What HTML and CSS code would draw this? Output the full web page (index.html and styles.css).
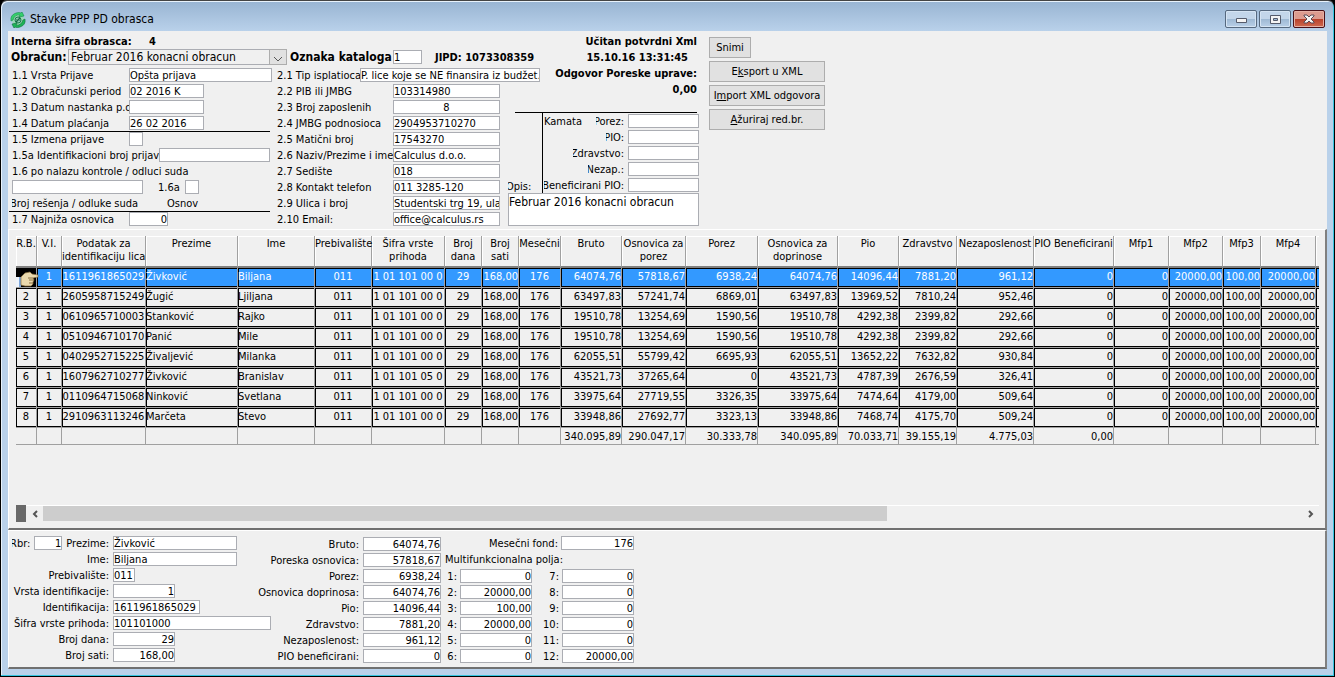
FILE: index.html
```html
<!DOCTYPE html>
<html lang="sr">

<head>
    <meta charset="UTF-8">
    <meta name="viewport" content="width=device-width, initial-scale=1.0">
    <title>Stavke PPP PD obrasca</title>
    <link rel="stylesheet" href="styles.css">
</head>

<body>
    <div class="window">
        <div class="titlebar">
            <svg class="app-icon" viewBox="0 0 16 16">
                <circle cx="8" cy="8" r="6" fill="#9ad8b4"/>
                <path d="M1 9 Q0 3 6 1 Q9 0 11 1 L12 0 L14 4 L9 5 L10 3 Q5 2 3 8 Z" fill="#35d06c" stroke="#12894a" stroke-width="0.6"/>
                <path d="M15 7 Q16 13 10 15 Q7 16 5 15 L4 16 L2 12 L7 11 L6 13 Q11 14 13 8 Z" fill="#1fb457" stroke="#0c7038" stroke-width="0.6"/>
                <circle cx="8" cy="8" r="3" fill="#8fcab4" stroke="#1a7a4c"/>
                <path d="M6 10 L10 6 M7 7 V10 M9 6 V9" stroke="#1a6a44" fill="none"/>
            </svg>
            <h1>Stavke PPP PD obrasca</h1>
            <div class="win-buttons">
                <button class="win-btn" aria-label="Minimize">
                    <svg viewBox="0 0 12 10"><path d="M1 5 H11 V9 H1 Z" transform="translate(.5 -.5)" fill="#f4f4f4" stroke="#555b6b"/></svg>
                </button>
                <button class="win-btn" aria-label="Maximize">
                    <svg viewBox="0 0 12 10"><path d="M1 1 H11 V9 H1 Z M4 4 H8 V6 H4 Z" transform="translate(.5 .5)" fill="#f4f4f4" fill-rule="evenodd" stroke="#555b6b"/></svg>
                </button>
                <button class="win-btn win-close" aria-label="Close">
                    <svg viewBox="0 0 12 10"><path d="M1 1 H4 L6 3 L8 1 H11 V2 L8 5 L11 8 V9 H8 L6 7 L4 9 H1 V8 L4 5 L1 2 Z" fill="#f4f4f4" stroke="#5b4a55"/></svg>
                </button>
            </div>
        </div>

        <div class="client">
            <!-- Header form -->
            <form class="form-panel">
                <div class="form-main">
                    <div class="row strong"><span class="caption">Interna šifra obrasca:</span><span>4</span></div>
                    <div class="row strong head-row">
                        <label class="big" for="obracun">Obračun:</label>
                        <div class="combo">
                            <select id="obracun">
                                <option>Februar 2016 konacni obracun</option>
                            </select>
                            <svg class="combo-arrow" viewBox="0 0 18 16"><rect x="0" y="0" width="18" height="16" fill="#adadad"/><rect x="1" y="1" width="16" height="14" fill="#e1e1e1"/><path d="M5 8 L9 12 L13 8" fill="none" stroke="#555"/></svg>
                        </div>
                        <label class="big katalog" for="katalog">Oznaka kataloga</label>
                        <input id="katalog" class="w29" value="1">
                        <span class="jipd">JIPD: 1073308359</span>
                    </div>
                    <div class="form-columns">
                        <div class="col-left">
                            <div class="row"><label class="name" for="f11">1.1 Vrsta Prijave</label><input id="f11" class="w143" value="Opšta prijava"></div>
                            <div class="row"><label class="name" for="f12">1.2 Obračunski period</label><input id="f12" class="w75" value="02 2016 K"></div>
                            <div class="row"><label class="name" for="f13">1.3 Datum nastanka p.o</label><input id="f13" class="w75"></div>
                            <div class="row"><label class="name" for="f14">1.4 Datum plaćanja</label><input id="f14" class="w75" value="26 02 2016"></div>
                            <div class="row lined"><label class="name" for="f15">1.5 Izmena prijave</label><input id="f15" class="w14"></div>
                            <div class="row"><label class="name name-wide" for="f15a">1.5a Identifikacioni broj prijav</label><input id="f15a" class="w111"></div>
                            <div class="row"><label for="f16">1.6 po nalazu kontrole / odluci suda</label></div>
                            <div class="row row-16"><input id="f16" class="w131"><label for="f16a">1.6a</label><input id="f16a" class="w14"></div>
                            <div class="row"><span class="cut broj">Broj rešenja / odluke suda</span><span>Osnov</span></div>
                            <div class="row lined"><label class="name" for="f17">1.7 Najniža osnovica</label><input id="f17" class="w39 num" value="0"></div>
                        </div>
                        <div class="col-mid">
                            <div class="row"><label class="name-short" for="f21">2.1 Tip isplatioca</label><input id="f21" class="w180" value="P. lice koje se NE finansira iz budžet…"></div>
                            <div class="row"><label class="name" for="f22">2.2 PIB ili JMBG</label><input id="f22" class="w107" value="103314980"></div>
                            <div class="row"><label class="name" for="f23">2.3 Broj zaposlenih</label><input id="f23" class="w107 mid" value="8"></div>
                            <div class="row"><label class="name" for="f24">2.4 JMBG podnosioca</label><input id="f24" class="w107" value="2904953710270"></div>
                            <div class="row"><label class="name" for="f25">2.5 Matični broj</label><input id="f25" class="w107" value="17543270"></div>
                            <div class="row"><label class="name" for="f26">2.6 Naziv/Prezime i ime</label><input id="f26" class="w107" value="Calculus d.o.o."></div>
                            <div class="row"><label class="name" for="f27">2.7 Sedište</label><input id="f27" class="w107" value="018"></div>
                            <div class="row"><label class="name" for="f28">2.8 Kontakt telefon</label><input id="f28" class="w107" value="011 3285-120"></div>
                            <div class="row"><label class="name" for="f29">2.9 Ulica i broj</label><input id="f29" class="w107" value="Studentski trg 19, ulaz"></div>
                            <div class="row"><label class="name" for="f210">2.10 Email:</label><input id="f210" class="w107" value="office@calculus.rs"></div>
                        </div>
                    </div>
                </div>

                <div class="form-status">
                    <div class="row strong end">Učitan potvrdni Xml</div>
                    <div class="row strong end stamp">15.10.16 13:31:45</div>
                    <div class="row strong end">Odgovor Poreske uprave:</div>
                    <div class="row strong end">0,00</div>
                    <div class="kamata">
                        <label class="cut" for="opis">Opis:</label>
                        <div class="kamata-box">
                            <div class="row end"><span class="kamata-title">Kamata</span><label class="cut" for="k1">Porez:</label><input id="k1" class="w71"></div>
                            <div class="row end"><label class="cut" for="k2">PIO:</label><input id="k2" class="w71"></div>
                            <div class="row end"><label class="cut" for="k3">Zdravstvo:</label><input id="k3" class="w71"></div>
                            <div class="row end"><label class="cut" for="k4">Nezap.:</label><input id="k4" class="w71"></div>
                            <div class="row end"><label class="cut" for="k5">Beneficirani PIO:</label><input id="k5" class="w71"></div>
                        </div>
                    </div>
                    <textarea id="opis">Februar 2016 konacni obracun</textarea>
                </div>

                <div class="form-buttons">
                    <button type="button" class="btn btn-small">Snimi</button>
                    <button type="button" class="btn">E<u>k</u>sport u XML</button>
                    <button type="button" class="btn">I<u>m</u>port XML odgovora</button>
                    <button type="button" class="btn"><u>A</u>žuriraj red.br.</button>
                </div>
            </form>

            <!-- Items grid -->
            <div class="grid-panel">
                <div class="grid-view">
                    <table class="grid">
                        <colgroup id="grid-cols"></colgroup>
                        <thead>
                            <tr id="grid-head"></tr>
                        </thead>
                        <tbody id="grid-body"></tbody>
                        <tfoot>
                            <tr id="grid-foot"></tr>
                        </tfoot>
                    </table>
                </div>
                <div class="scrollbar">
                    <span class="split"></span>
                    <button class="scroll-btn" aria-label="Scroll left"><svg viewBox="0 0 8 8"><path d="M6 1 L3 4 L6 7" fill="none" stroke="#555" stroke-width="2"/></svg></button>
                    <div class="track"><div class="thumb"></div></div>
                    <button class="scroll-btn" aria-label="Scroll right"><svg viewBox="0 0 8 8"><path d="M2 1 L5 4 L2 7" fill="none" stroke="#555" stroke-width="2"/></svg></button>
                </div>
            </div>

            <!-- Selected item -->
            <form class="detail-panel">
                <div class="detail-person">
                    <div class="row">
                        <div class="name"><label class="cut" for="rbr">Rbr:</label><input id="rbr" class="w28 num" value="1"><label for="d1">Prezime:</label></div>
                        <input id="d1" class="w124" value="Živković">
                    </div>
                    <div class="row"><div class="name"><label for="d2">Ime:</label></div><input id="d2" class="w124" value="Biljana"></div>
                    <div class="row"><div class="name"><label for="d3">Prebivalište:</label></div><input id="d3" class="w22" value="011"></div>
                    <div class="row"><div class="name"><label for="d4">Vrsta identifikacije:</label></div><input id="d4" class="w62 num" value="1"></div>
                    <div class="row"><div class="name"><label for="d5">Identifikacija:</label></div><input id="d5" class="w87" value="1611961865029"></div>
                    <div class="row"><div class="name"><label for="d6">Šifra vrste prihoda:</label></div><input id="d6" class="w158" value="101101000"></div>
                    <div class="row"><div class="name"><label for="d7">Broj dana:</label></div><input id="d7" class="w62 num" value="29"></div>
                    <div class="row"><div class="name"><label for="d8">Broj sati:</label></div><input id="d8" class="w62 num" value="168,00"></div>
                </div>
                <div class="detail-amounts">
                    <div class="row"><div class="name"><label for="a1">Bruto:</label></div><input id="a1" class="w78 num" value="64074,76"></div>
                    <div class="row"><div class="name"><label for="a2">Poreska osnovica:</label></div><input id="a2" class="w78 num" value="57818,67"></div>
                    <div class="row"><div class="name"><label for="a3">Porez:</label></div><input id="a3" class="w78 num" value="6938,24"></div>
                    <div class="row"><div class="name"><label for="a4">Osnovica doprinosa:</label></div><input id="a4" class="w78 num" value="64074,76"></div>
                    <div class="row"><div class="name"><label for="a5">Pio:</label></div><input id="a5" class="w78 num" value="14096,44"></div>
                    <div class="row"><div class="name"><label for="a6">Zdravstvo:</label></div><input id="a6" class="w78 num" value="7881,20"></div>
                    <div class="row"><div class="name"><label for="a7">Nezaposlenost:</label></div><input id="a7" class="w78 num" value="961,12"></div>
                    <div class="row"><div class="name"><label for="a8">PIO beneficirani:</label></div><input id="a8" class="w78 num" value="0"></div>
                </div>
                <div class="detail-mfp">
                    <div class="row end"><label for="fond">Mesečni fond:</label><input id="fond" class="w73 num" value="176"></div>
                    <div class="row">Multifunkcionalna polja:</div>
                    <div class="mfp-grid" id="mfp"></div>
                </div>
            </form>
        </div>
    </div>

    <script>
        const columns = [
            ['R.B.', 21, 'c'], ['V.I.', 25, 'c'], ['Podatak za<br>identifikaciju lica', 84, 'c'],
            ['Prezime', 92, 'l'], ['Ime', 77, 'l'], ['Prebivalište', 57, 'c'],
            ['Šifra vrste<br>prihoda', 73, 'c'], ['Broj<br>dana', 37, 'c'], ['Broj<br>sati', 37, 'r'],
            ['Mesečni', 42, 'c'], ['Bruto', 61, 'r'], ['Osnovica za<br>porez', 64, 'r'],
            ['Porez', 72, 'r'], ['Osnovica za<br>doprinose', 80, 'r'], ['Pio', 61, 'r'],
            ['Zdravstvo', 58, 'r'], ['Nezaposlenost', 77, 'r'], ['PIO Beneficirani', 80, 'r'],
            ['Mfp1', 55, 'r'], ['Mfp2', 54, 'r'], ['Mfp3', 38, 'r'], ['Mfp4', 55, 'r'], ['', 55, 'r']
        ];

        // id, last name, first name, income code, gross, tax base, tax, contribution base, pension, health, unemployment
        const people = [
            ['1611961865029', 'Živković', 'Biljana', '1 01 101 00 0', '64074,76', '57818,67', '6938,24', '64074,76', '14096,44', '7881,20', '961,12'],
            ['2605958715249', 'Žugić', 'Ljiljana', '1 01 101 00 0', '63497,83', '57241,74', '6869,01', '63497,83', '13969,52', '7810,24', '952,46'],
            ['0610965710003', 'Stanković', 'Rajko', '1 01 101 00 0', '19510,78', '13254,69', '1590,56', '19510,78', '4292,38', '2399,82', '292,66'],
            ['0510946710170', 'Panić', 'Mile', '1 01 101 00 0', '19510,78', '13254,69', '1590,56', '19510,78', '4292,38', '2399,82', '292,66'],
            ['0402952715225', 'Živaljević', 'Milanka', '1 01 101 00 0', '62055,51', '55799,42', '6695,93', '62055,51', '13652,22', '7632,82', '930,84'],
            ['1607962710277', 'Živković', 'Branislav', '1 01 101 05 0', '43521,73', '37265,64', '0', '43521,73', '4787,39', '2676,59', '326,41'],
            ['0110964715068', 'Ninković', 'Svetlana', '1 01 101 00 0', '33975,64', '27719,55', '3326,35', '33975,64', '7474,64', '4179,00', '509,64'],
            ['2910963113246', 'Marčeta', 'Stevo', '1 01 101 00 0', '33948,86', '27692,77', '3323,13', '33948,86', '7468,74', '4175,70', '509,24']
        ];

        const totals = ['', '', '', '', '', '', '', '', '', '', '340.095,89', '290.047,17', '30.333,78',
            '340.095,89', '70.033,71', '39.155,19', '4.775,03', '0,00', '', '', '', '', ''];

        const hand = `<svg class="hand" viewBox="0 0 23 19">
            <rect width="20" height="19" fill="#000"/>
            <path d="M0 9 H4 L5 19 H0 Z" fill="#eef4fb"/>
            <path d="M3 9 H5 V19 H3 Z" fill="#7fa8dc"/>
            <path d="M5 9 L9 5 L14 4 L16 6 L22 7 V9 L17 10 L18 12 L17 14 V16 L15 18 H9 L5 17 Z" fill="#ead9ae" stroke="#8a7040" stroke-width="0.7"/>
            <path d="M12 10 H17 M13 12 H18 M13 15 H17" stroke="#8a7040" fill="none"/>
        </svg>`;

        function cell(value, i) {
            return `<td class="${columns[i][2]}">${value}</td>`;
        }

        document.getElementById('grid-cols').innerHTML =
            columns.map(c => `<col style="width: ${c[1]}px">`).join('');
        document.getElementById('grid-head').innerHTML =
            columns.map(c => `<th>${c[0]}</th>`).join('');
        document.getElementById('grid-body').innerHTML = people.map((p, n) => {
            const [id, last, first, code, ...amounts] = p;
            const values = [n === 0 ? hand : n + 1, '1', id, last, first, '011', code, '29', '168,00', '176',
                ...amounts, '0', '0', '20000,00', '100,00', '20000,00', ''];
            return `<tr class="${n === 0 ? 'selected' : ''}">${values.map(cell).join('')}</tr>`;
        }).join('');
        document.getElementById('grid-foot').innerHTML = totals.map(cell).join('');

        const mfp = ['0', '20000,00', '100,00', '20000,00', '0', '0', '0', '0', '0', '0', '0', '20000,00'];
        document.getElementById('mfp').innerHTML = mfp.map((v, i) =>
            `<div class="row end"><label for="m${i + 1}">${i + 1}:</label><input id="m${i + 1}" class="w72 num" value="${v}"></div>`
        ).join('');
    </script>
</body>

</html>
```
FILE: styles.css
```css
* {
    box-sizing: border-box;
}

body {
    margin: 0;
    font-family: Tahoma, "DejaVu Sans Condensed", "Noto Sans", sans-serif;
    font-size: 11px;
    line-height: 13px;
    color: #000;
    background-color: #000;
}

input,
select,
textarea,
button {
    font: inherit;
    color: inherit;
    margin: 0;
    border-radius: 0;
}

/* Window frame */
.window {
    display: flex;
    flex-direction: column;
    min-height: 100vh;
    border: 1px solid #000;
    border-top-color: #444;
    border-radius: 7px 7px 0 0;
    padding: 0 7px 7px;
    background: linear-gradient(#98b4d2, #b9d1ea 30px);
    box-shadow: inset -1px -1px 0 #35c5e0, inset 1px 1px 0 #e8f2fb;
}

.titlebar {
    display: flex;
    align-items: center;
    height: 30px;
    padding-left: 2px;
}

.titlebar h1 {
    margin: 7px 0 0 4px;
    font-size: 12px;
    font-weight: normal;
}

.app-icon {
    width: 16px;
    height: 16px;
    margin-top: 7px;
}

.win-buttons {
    display: flex;
    gap: 2px;
    margin: 6px 2px 0 auto;
}

.win-btn {
    width: 32px;
    height: 18px;
    padding: 0;
    border: 1px solid #56697f;
    border-radius: 2px;
    background: linear-gradient(#c3d6ea 50%, #9db8d3 50%, #b9d0e8);
    box-shadow: inset 0 0 0 1px #d5e4f3;
}

.win-btn svg {
    display: block;
    width: 12px;
    height: 10px;
    margin: 0 auto;
}

.win-close {
    border-color: #4a1018;
    background: linear-gradient(#dd9b8f 50%, #b8402b 50%, #cf6a50);
    box-shadow: inset 0 0 0 1px #e5b0a5;
}

.client {
    display: flex;
    flex-direction: column;
    flex: 1;
    background-color: #f0f0f0;
}

/* Shared form rows */
.row {
    display: flex;
    align-items: center;
    height: 16px;
    white-space: nowrap;
}

.row > * {
    flex: none;
}

.row.end {
    justify-content: flex-end;
}

.strong {
    font-weight: bold;
}

.row input {
    flex: none;
    height: 14px;
    padding: 1px 0 0 0;
    border: 1px solid #abadb3;
    background-color: #fff;
    font-weight: normal;
}

.row .num {
    text-align: right;
}

.row .mid {
    text-align: center;
}

/* labels that lose their first pixels to the field edge */
.cut {
    overflow: hidden;
    text-indent: -2px;
}

.w14 {
    width: 14px;
}

.w22 {
    width: 22px;
}

.w28 {
    width: 28px;
}

.w29 {
    width: 29px;
}

.w39 {
    width: 39px;
}

.w62 {
    width: 62px;
}

.w71 {
    width: 71px;
}

.w72 {
    width: 72px;
}

.w73 {
    width: 73px;
}

.w75 {
    width: 75px;
}

.w78 {
    width: 78px;
}

.w87 {
    width: 87px;
}

.w107 {
    width: 107px;
}

.w111 {
    width: 111px;
}

.w124 {
    width: 124px;
}

.w131 {
    width: 131px;
}

.w143 {
    width: 143px;
}

.w158 {
    width: 158px;
}

.w180 {
    width: 180px;
}

/* Header form */
.form-panel {
    display: flex;
    padding: 2px 0 2px 1px;
}

.form-main {
    flex: none;
    width: 499px;
}

.form-main .caption {
    width: 138px;
}

.form-main > .row {
    padding-left: 2px;
}

.big {
    font-size: 12px;
}

.head-row .big {
    width: 57px;
}

.head-row .katalog {
    width: 103px;
    margin-left: 3px;
}

.combo {
    position: relative;
    width: 219px;
    height: 16px;
}

.combo select {
    appearance: none;
    display: block;
    width: 100%;
    height: 16px;
    padding: 0 20px 0 2px;
    border: 1px solid #abadb3;
    background-color: #f0f0f0;
    font-size: 12px;
    font-weight: normal;
    line-height: 14px;
}

.combo-arrow {
    position: absolute;
    top: 0;
    right: 0;
    width: 18px;
    height: 16px;
    pointer-events: none;
}

.jipd {
    margin-left: 13px;
}

.form-columns {
    display: flex;
    margin-top: 2px;
}

.col-left {
    flex: none;
    width: 261px;
    margin-right: 7px;
}

.col-left .row {
    padding-left: 3px;
}

.col-left .name {
    width: 117px;
}

.col-left .name-wide {
    width: 147px;
}

.col-left .lined {
    box-shadow: inset 0 1px 0 #000;
}

.row-16 label {
    margin: 0 5px 0 15px;
}

.broj {
    width: 155px;
}

.col-mid .name {
    width: 116px;
}

.col-mid .name-short {
    width: 83px;
}

.form-status {
    flex: none;
    width: 191px;
}

.form-status > .row {
    padding-right: 2px;
}

.form-status > .stamp {
    padding-right: 11px;
}

.kamata {
    display: flex;
    align-items: flex-end;
    justify-content: space-between;
    margin-top: 15px;
    padding-top: 1px;
    background: linear-gradient(#000, #000) 7px 0 / 182px 1px no-repeat;
}

.kamata-box {
    width: 157px;
    border-left: 1px solid #000;
}

.kamata-box label {
    margin-right: 4px;
}

.kamata-title {
    margin-right: auto;
    padding-left: 1px;
}

.form-status textarea {
    display: block;
    width: 100%;
    height: 33px;
    padding: 1px 0;
    border: 1px solid #abadb3;
    background-color: #fff;
    font-size: 12px;
    line-height: 14px;
    resize: none;
    overflow: hidden;
}

.form-buttons {
    display: flex;
    flex-direction: column;
    gap: 3px;
    width: 116px;
    margin: 4px 0 0 10px;
}

.btn {
    height: 21px;
    padding: 0;
    border: 1px solid #adadad;
    background-color: #e1e1e1;
}

.btn-small {
    width: 42px;
}

/* Items grid */
.grid-panel {
    border: solid;
    border-width: 1px 2px 2px 1px;
    border-color: #fff #808080 #707070 #fff;
    padding: 6px 6px 6px 7px;
}

.grid-view {
    height: 269px;
    overflow: hidden;
}

.grid {
    width: 1355px;
    table-layout: fixed;
    border-collapse: separate;
    border-spacing: 0;
}

.grid th {
    height: 32px;
    padding: 1px 0;
    border-right: 1px solid #a0a0a0;
    border-bottom: 2px solid #808080;
    box-shadow: inset 1px 1px 0 #fff;
    font-weight: normal;
    vertical-align: top;
    white-space: nowrap;
}

.grid td {
    height: 20px;
    padding: 0 0 2px;
    border-right: 1px solid #a0a0a0;
    border-bottom: 1px solid #a0a0a0;
    white-space: nowrap;
    overflow: hidden;
}

.grid tbody td {
    box-shadow: inset 1px 1px 0 #000, inset 0 -1px 0 #000;
}

.grid tfoot td {
    height: 17px;
    padding: 0;
}

.grid .c {
    text-align: center;
}

.grid .l {
    text-align: left;
}

.grid .r {
    text-align: right;
}

.grid .selected td {
    background-color: #3399ff;
    color: #fff;
}

/* the pointing finger reaches into the next cell */
.grid .selected td:first-child {
    position: relative;
    padding: 0;
    overflow: visible;
}

.hand {
    display: block;
    width: 23px;
    height: 19px;
}

.scrollbar {
    display: flex;
    height: 17px;
}

.split {
    width: 10px;
    background-color: #696969;
}

.scroll-btn {
    display: flex;
    align-items: center;
    justify-content: center;
    width: 17px;
    padding: 0;
    border: 0;
    border-top: 1px solid #fff;
    background: none;
}

.scroll-btn svg {
    width: 8px;
    height: 8px;
}

.track {
    flex: 1;
    padding-bottom: 1px;
    border-top: 1px solid #fff;
}

.thumb {
    width: 67%;
    height: 100%;
    background-color: #cdcdcd;
}

/* Selected item */
.detail-panel {
    display: flex;
    flex: 1;
    border: solid;
    border-width: 1px 2px 2px 1px;
    border-color: #fff #808080 #707070 #fff;
    padding: 4px 0 0 3px;
}

.detail-person,
.detail-amounts {
    flex: none;
}

.detail-person .name,
.detail-amounts .name {
    display: flex;
    justify-content: flex-end;
    align-items: center;
    padding-right: 4px;
}

.detail-person {
    width: 245px;
}

.detail-person .name {
    width: 101px;
}

.detail-person .name input {
    margin: 0 4px;
}

.detail-amounts .name {
    width: 106px;
}

.detail-amounts {
    padding-top: 1px;
}

.detail-mfp {
    width: 189px;
    margin-left: 4px;
}

.detail-mfp label {
    margin-right: 3px;
}

.mfp-grid {
    display: grid;
    grid-auto-flow: column;
    grid-template-rows: repeat(6, 16px);
    grid-template-columns: 87px 102px;
    padding-top: 1px;
}
```
